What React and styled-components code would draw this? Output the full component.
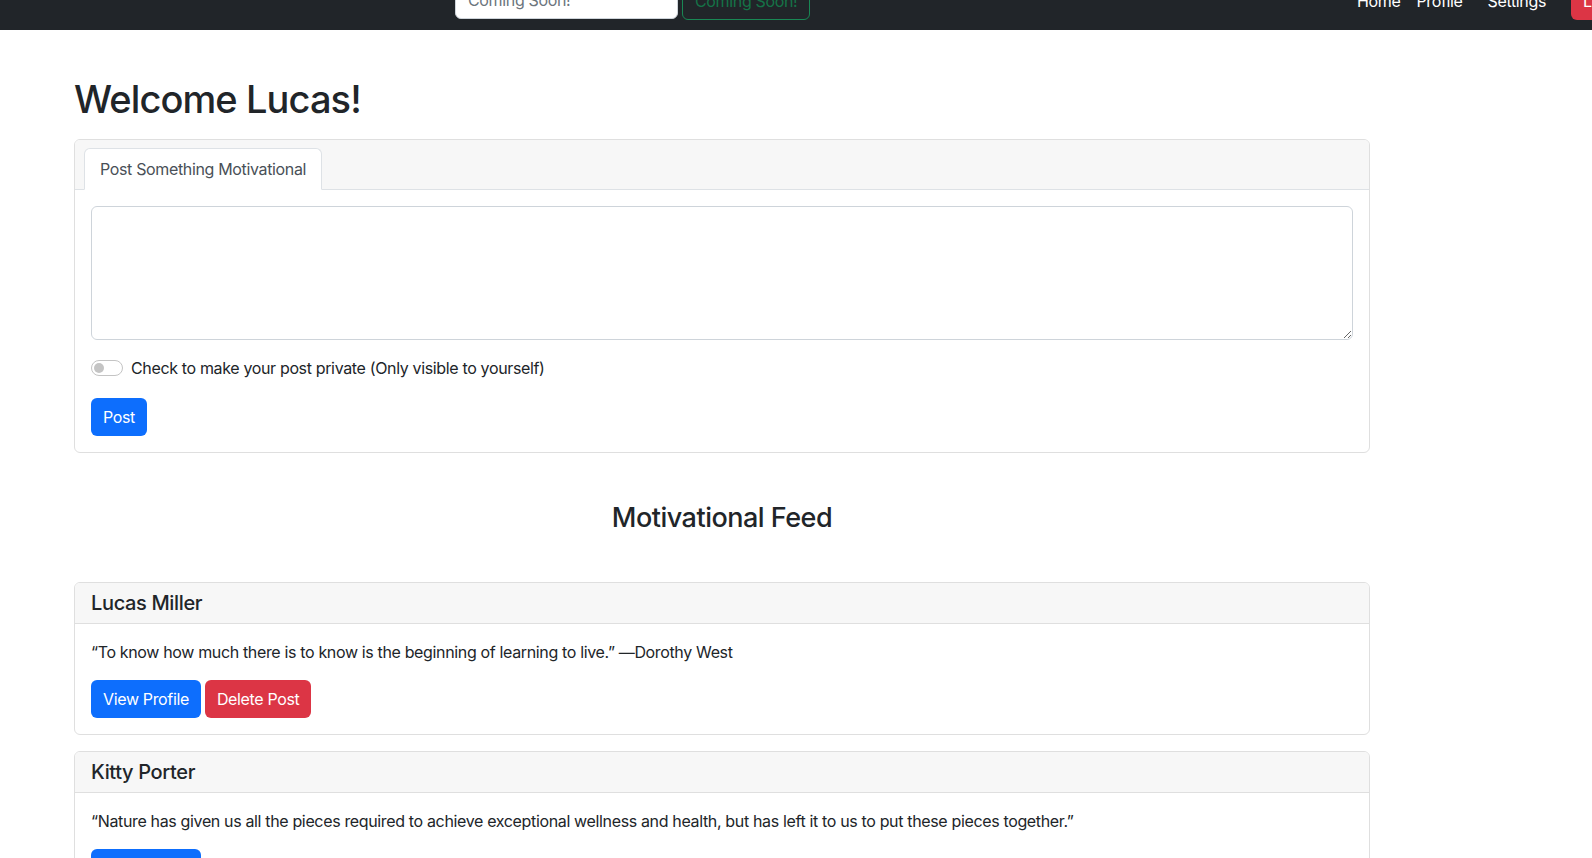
import styled, { createGlobalStyle } from "styled-components";

const posts = [
  {
    author: "Lucas Miller",
    quote:
      "\u201CTo know how much there is to know is the beginning of learning to live.\u201D \u2014Dorothy West",
    own: true,
  },
  {
    author: "Kitty Porter",
    quote:
      "\u201CNature has given us all the pieces required to achieve exceptional wellness and health, but has left it to us to put these pieces together.\u201D",
    own: false,
  },
];

function App() {
  return (
    <>
      <GlobalStyle />
      <Navbar>
        <SearchForm>
          <SearchInput placeholder="Coming Soon!" />
          <OutlineButton>Coming Soon!</OutlineButton>
        </SearchForm>
        <NavLinks>
          <NavLink>Home</NavLink>
          <NavLink>Profile</NavLink>
          <NavLink $wide>Settings</NavLink>
          <LogoutButton>Logout</LogoutButton>
        </NavLinks>
      </Navbar>
      <Container>
        <Title>Welcome Lucas!</Title>
        <Card>
          <TabHeader>
            <Tab>Post Something Motivational</Tab>
          </TabHeader>
          <CardBody>
            <TextArea />
            <SwitchRow>
              <Switch />
              <span>Check to make your post private (Only visible to yourself)</span>
            </SwitchRow>
            <Button $variant="primary">Post</Button>
          </CardBody>
        </Card>
        <FeedTitle>Motivational Feed</FeedTitle>
        {posts.map((post) => (
          <PostCard key={post.author}>
            <PostHeader>{post.author}</PostHeader>
            <CardBody>
              <Quote>{post.quote}</Quote>
              <Actions>
                <Button $variant="primary">View Profile</Button>
                {post.own && <Button $variant="danger">Delete Post</Button>}
              </Actions>
            </CardBody>
          </PostCard>
        ))}
      </Container>
    </>
  );
}

const GlobalStyle = createGlobalStyle`
  * { box-sizing: border-box; }
  html, body { margin: 0; overflow: hidden; }
  body {
    font-family: Inter, "Liberation Sans", sans-serif;
    font-size: 16px;
    line-height: 1.5;
    letter-spacing: -0.35px;
    color: #212529;
    background: #fff;
  }
`;

const Navbar = styled.nav`
  height: 30px;
  background: #212529;
  display: flex;
  align-items: flex-end;
  padding: 0 0 10px 455px;
  overflow: hidden;
  white-space: nowrap;
`;

const SearchForm = styled.div`
  display: flex;
  gap: 4px;
  flex-shrink: 0;
`;

const SearchInput = styled.input`
  width: 223px;
  height: 38px;
  padding: 6px 12px;
  border: 1px solid #ced4da;
  border-radius: 6px;
  font: inherit;
  letter-spacing: inherit;
  color: #212529;
  &::placeholder { color: #6c757d; }
`;

const OutlineButton = styled.button`
  width: 128px;
  height: 39px;
  padding: 6px 12px;
  border: 1px solid #198754;
  border-radius: 6px;
  background: transparent;
  color: #157347;
  font: inherit;
  letter-spacing: inherit;
`;

const NavLinks = styled.div`
  display: flex;
  align-items: center;
  margin-left: 539px;
  flex-shrink: 0;
`;

const NavLink = styled.a`
  color: #fff;
  padding: 0 8px;
  margin-left: ${(p) => (p.$wide ? "9px" : "0")};
`;

const LogoutButton = styled.button`
  margin-left: 17px;
  height: 39px;
  padding: 6px 12px;
  border: none;
  border-radius: 6px;
  background: #dc3545;
  color: #fff;
  font: inherit;
  letter-spacing: inherit;
`;

const Container = styled.main`
  width: 1296px;
  margin-left: 74px;
  padding-top: 47px;
`;

const Title = styled.h1`
  margin: 0 0 16px;
  font-size: 38px;
  font-weight: 500;
  line-height: 1.2;
  letter-spacing: -0.9px;
`;

const Card = styled.section`
  border: 1px solid #dfdfdf;
  border-radius: 6px;
  overflow: hidden;
`;

const TabHeader = styled.div`
  display: flex;
  padding: 8px 9px 0;
  background: #f7f7f7;
  border-bottom: 1px solid #dee2e6;
`;

const Tab = styled.div`
  padding: 8px 15px;
  margin-bottom: -1px;
  background: #fff;
  border: 1px solid #dee2e6;
  border-bottom-color: #fff;
  border-radius: 6px 6px 0 0;
  color: #495057;
`;

const CardBody = styled.div`
  padding: 16px;
`;

const TextArea = styled.textarea`
  display: block;
  width: 100%;
  height: 134px;
  border: 1px solid #ced4da;
  border-radius: 6px;
  font: inherit;
  padding: 6px 12px;
  margin: 0 0 16px;
`;

const SwitchRow = styled.label`
  display: flex;
  align-items: center;
  gap: 8px;
  margin-bottom: 18px;
`;

const Switch = styled.span`
  width: 32px;
  height: 16px;
  border: 1px solid #c4c4c4;
  border-radius: 8px;
  display: flex;
  align-items: center;
  padding: 0 2px;
  &::before {
    content: "";
    width: 10px;
    height: 10px;
    border-radius: 50%;
    background: #c4c4c4;
  }
`;

const Button = styled.button`
  height: 38px;
  padding: 6px 12px;
  border: none;
  border-radius: 6px;
  font: inherit;
  letter-spacing: inherit;
  color: #fff;
  background: ${(p) => (p.$variant === "danger" ? "#dc3545" : "#0d6efd")};
`;

const FeedTitle = styled.h3`
  margin: 49px 0 48px;
  text-align: center;
  font-size: 27px;
  font-weight: 500;
  line-height: 1.2;
  letter-spacing: -0.5px;
`;

const PostCard = styled(Card)`
  margin-bottom: 16px;
`;

const PostHeader = styled.h5`
  margin: 0;
  padding: 8px 16px;
  font-size: 20px;
  font-weight: 500;
  line-height: 1.2;
  background: #f7f7f7;
  border-bottom: 1px solid #dfdfdf;
`;

const Quote = styled.p`
  margin: 0 0 16px;
`;

const Actions = styled.div`
  display: flex;
  gap: 4px;
`;

export default App;
